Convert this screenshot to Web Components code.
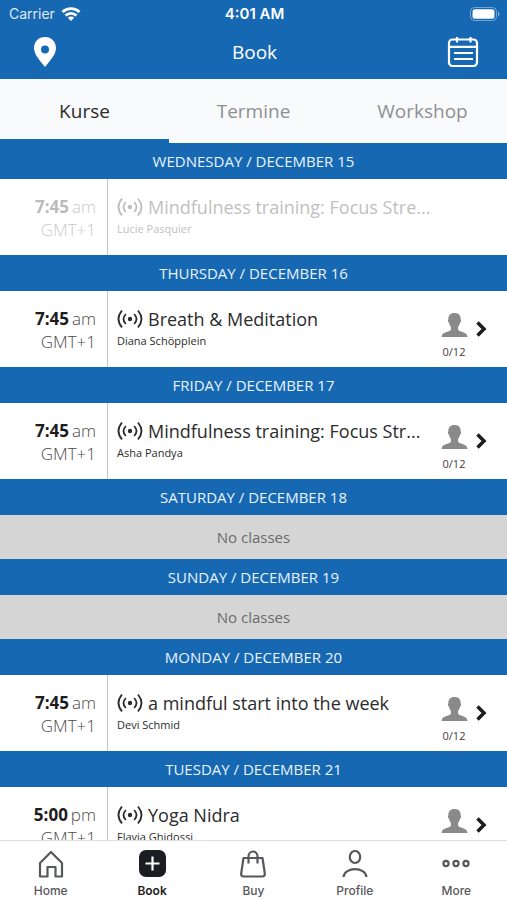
<!DOCTYPE html>
<html lang="en">
<head>
<meta charset="utf-8">
<meta name="viewport" content="width=device-width, initial-scale=1">
<title>Book</title>
<style>
    body {
        margin: 0;
        font-family: "Open Sans", "Noto Sans", sans-serif;
        color: #2b2b2b;
        background: #fff;
        --brand: #1768b3;
    }
</style>
</head>
<body>
<booking-app>
    <status-bar slot="top" carrier="Carrier" time="4:01 AM"></status-bar>
    <title-bar slot="top">Book</title-bar>
    <tab-strip slot="top">
        <tab-item active>Kurse</tab-item>
        <tab-item>Termine</tab-item>
        <tab-item>Workshop</tab-item>
    </tab-strip>

    <day-section>
        <span slot="day">WEDNESDAY / DECEMBER 15</span>
        <class-row time="7:45" period="am" zone="GMT+1" teacher="Lucie Pasquier" past>Mindfulness training: Focus Stre...</class-row>
    </day-section>
    <day-section>
        <span slot="day">THURSDAY / DECEMBER 16</span>
        <class-row time="7:45" period="am" zone="GMT+1" teacher="Diana Schöpplein" booked="0/12">Breath &amp; Meditation</class-row>
    </day-section>
    <day-section>
        <span slot="day">FRIDAY / DECEMBER 17</span>
        <class-row time="7:45" period="am" zone="GMT+1" teacher="Asha Pandya" booked="0/12">Mindfulness training: Focus Str...</class-row>
    </day-section>
    <day-section>
        <span slot="day">SATURDAY / DECEMBER 18</span>
    </day-section>
    <day-section>
        <span slot="day">SUNDAY / DECEMBER 19</span>
    </day-section>
    <day-section>
        <span slot="day">MONDAY / DECEMBER 20</span>
        <class-row time="7:45" period="am" zone="GMT+1" teacher="Devi Schmid" booked="0/12">a mindful start into the week</class-row>
    </day-section>
    <day-section>
        <span slot="day">TUESDAY / DECEMBER 21</span>
        <class-row time="5:00" period="pm" zone="GMT+1" teacher="Flavia Ghidossi" booked="0/12">Yoga Nidra</class-row>
    </day-section>

    <nav-bar slot="bottom">
        <nav-item icon="home">Home</nav-item>
        <nav-item icon="book" active>Book</nav-item>
        <nav-item icon="buy">Buy</nav-item>
        <nav-item icon="profile">Profile</nav-item>
        <nav-item icon="more">More</nav-item>
    </nav-bar>
</booking-app>

<script>
function template(html) {
    const tmp = document.createElement('template');
    tmp.innerHTML = html;
    return tmp;
}

const NAV_ICONS = {
    home: `<path d="M3 13 14 2 25 13v13.500h-6.500V17h-8v9.500H3z"/>`,
    book: `<rect x="1" y="0" width="27" height="27" rx="7" fill="currentColor" stroke="none"/><path d="M14.500 6.500v14M7.500 13.500h14" stroke="#fff"/>`,
    buy: `<path d="M4.500 8h19l2.300 15.500q.3 3-2.700 3H4.900q-3 0-2.700-3z"/><path d="M9.500 13.500V6.500a4.500 5 0 0 1 9 0v7"/>`,
    profile: `<ellipse cx="14" cy="7" rx="5.200" ry="6"/><path d="M2.500 27c1-10.500 22-10.500 23 0"/>`,
    more: `<circle cx="4" cy="13.500" r="2.600"/><circle cx="14" cy="13.500" r="2.600"/><circle cx="24" cy="13.500" r="2.600"/>`
};

/**
 * Base class: clones the static template of the subclass into an open shadow root.
 */
class BaseElement extends HTMLElement {
    constructor() {
        super();
        this.attachShadow({mode: 'open'});
        this.shadowRoot.append(this.constructor.template.content.cloneNode(true));
    }

    setText(id, value) {
        this.shadowRoot.getElementById(id).textContent = value || '';
    }
}


class BookingApp extends BaseElement {
    static template = template(`
        <style>
            :host {
                display: flex;
                flex-direction: column;
                height: 100vh;
            }

            main {
                flex: 1;
                min-height: 0;
                overflow-y: auto;
                scrollbar-width: none;
            }
        </style>
        <header><slot name="top"></slot></header>
        <main><slot></slot></main>
        <footer><slot name="bottom"></slot></footer>`);
}


class StatusBar extends BaseElement {
    static template = template(`
        <style>
            :host {
                display: grid;
                grid-template-columns: 1fr auto 1fr;
                align-items: center;
                height: 28px;
                padding: 0 7px 0 9px;
                font: 400 14px/20px Inter, sans-serif;
                color: #fff;
                background: var(--brand);
            }

            .left {
                display: flex;
                align-items: center;
                gap: 6px;
            }

            #carrier { opacity: 0.85; }
            #time { font-size: 15px; font-weight: 600; }
            .battery { justify-self: end; }
            svg { display: block; }
        </style>
        <div class="left">
            <span id="carrier"></span>
            <svg width="20" height="14" viewBox="0 0 20 14" fill="none" stroke="#fff" stroke-width="2.800">
                <path d="M1.500 5a12.500 12.500 0 0 1 17 0M4.500 8.500a8 8 0 0 1 11 0"/>
                <path d="M10 14 6.800 10.800a4.600 4.600 0 0 1 6.400 0z" fill="#fff" stroke="none"/>
            </svg>
        </div>
        <span id="time"></span>
        <svg class="battery" width="30" height="14" viewBox="0 0 30 14">
            <rect x=".5" y=".5" width="26" height="13" rx="4" fill="none" stroke="#fff" stroke-opacity=".4"/>
            <rect x="2.500" y="2.300" width="22" height="9.400" rx="2.500" fill="#fff"/>
            <path d="M28 4.500q3 2.500 0 5z" fill="#fff" fill-opacity=".5"/>
        </svg>`);

    connectedCallback() {
        this.setText('carrier', this.getAttribute('carrier'));
        this.setText('time', this.getAttribute('time'));
    }
}


class TitleBar extends BaseElement {
    static template = template(`
        <style>
            :host {
                display: flex;
                align-items: center;
                justify-content: space-between;
                box-sizing: border-box;
                height: 51px;
                padding: 0 28px 3px;
                color: #fff;
                background: var(--brand);
            }

            h1 {
                margin: 0;
                font-size: 19px;
                line-height: 28px;
                font-weight: 400;
            }

            button {
                display: block;
                padding: 0;
                border: 0;
                color: inherit;
                background: none;
            }

            svg { display: block; }
        </style>
        <button type="button" aria-label="Location">
            <svg width="34" height="32" viewBox="0 0 34 32">
                <path fill="#fff" fill-rule="evenodd" d="M17 1C10.500 1 6 5.800 6 12c0 7 7 13.500 11 19 4-5.500 11-12 11-19C28 5.800 23.500 1 17 1zm0 8.500a4 4 0 1 0 0 8 4 4 0 0 0 0-8z"/>
            </svg>
        </button>
        <h1><slot></slot></h1>
        <button type="button" aria-label="Calendar">
            <svg width="32" height="32" viewBox="0 0 32 32" fill="none" stroke="#fff" stroke-width="2.200">
                <rect x="2" y="3.500" width="28" height="26.500" rx="3.500"/>
                <path d="M2 10.800h28M10 1v5.500M23.500 1v5.500M7 17h19M7 23h19"/>
            </svg>
        </button>`);
}


class TabStrip extends BaseElement {
    static template = template(`
        <style>
            :host {
                display: grid;
                grid-template-columns: repeat(3, 1fr);
                height: 64px;
                background: #f9fafc;
            }
        </style>
        <slot></slot>`);

    connectedCallback() {
        this.setAttribute('role', 'tablist');
    }
}


class TabItem extends BaseElement {
    static template = template(`
        <style>
            :host { display: grid; }

            button {
                padding: 4px 0 0;
                border: 0;
                border-bottom: 4px solid transparent;
                font: 400 19px/28px "Open Sans", sans-serif;
                color: #8e8f92;
                background: none;
            }

            :host([active]) button {
                color: #2b2b2b;
                border-color: var(--brand);
            }
        </style>
        <button type="button" role="tab"><slot></slot></button>`);

    connectedCallback() {
        this.shadowRoot.querySelector('button').setAttribute('aria-selected', this.hasAttribute('active'));
    }
}


class DaySection extends BaseElement {
    static template = template(`
        <style>
            :host { display: block; }

            h2 {
                margin: 0;
                font-size: 15px;
                line-height: 36px;
                font-weight: 400;
                text-align: center;
                color: #e8f3fc;
                background: var(--brand);
            }

            .empty {
                margin: 0;
                font-size: 15px;
                line-height: 44px;
                text-align: center;
                color: #6b6b6b;
                background: #d5d5d5;
            }

            [hidden] { display: none; }
        </style>
        <h2><slot name="day"></slot></h2>
        <slot></slot>
        <p class="empty" hidden>No classes</p>`);

    connectedCallback() {
        this.shadowRoot.querySelector('.empty').hidden = !!this.querySelector('class-row');
    }
}


class ClassRow extends BaseElement {
    static template = template(`
        <style>
            :host {
                display: grid;
                grid-template-columns: 108px 1fr auto;
                height: 76px;
                background: #fff;
            }

            .when {
                padding: 16px 11px 0 0;
                border-right: 1px solid #c4c4c4;
                font-size: 17px;
                line-height: 23px;
                font-weight: 300;
                text-align: right;
                white-space: nowrap;
                color: #4a4a4a;
            }

            .when div {
                display: flex;
                justify-content: flex-end;
                gap: 3px;
            }

            #time { font-weight: 700; color: #1d1d1d; }

            .what {
                min-width: 0;
                padding: 16px 0 0 9px;
            }

            .title {
                display: flex;
                align-items: center;
                gap: 5px;
            }

            h3 {
                margin: 0;
                font-size: 18px;
                line-height: 24px;
                font-weight: 400;
                white-space: nowrap;
            }

            #teacher {
                margin: 0;
                font-size: 11px;
                line-height: 20px;
            }

            .spots {
                display: grid;
                grid-template-columns: 28px 12px;
                column-gap: 7px;
                align-content: start;
                align-items: end;
                justify-items: center;
                padding: 22px 20px 0 0;
                color: #1d1d1d;
            }

            #booked {
                font-size: 11px;
                line-height: 30px;
                color: #3c3c3c;
            }

            svg { display: block; flex: none; }
            :host([past]) .when > *, :host([past]) .what { opacity: 0.3; }
            :host([past]) .spots { display: none; }
        </style>
        <div class="when">
            <div><span id="time"></span><span id="period"></span></div>
            <span id="zone"></span>
        </div>
        <div class="what">
            <div class="title">
                <svg width="26" height="20" viewBox="0 0 26 20" fill="none" stroke="currentColor" stroke-width="1.800">
                    <path d="M5 1.500q-7 8.500 0 17M21 1.500q7 8.500 0 17M8.800 5q-4.600 5 0 10M17.200 5q4.600 5 0 10"/>
                    <circle cx="13" cy="10" r="2.200" fill="currentColor" stroke="none"/>
                </svg>
                <h3><slot></slot></h3>
            </div>
            <p id="teacher"></p>
        </div>
        <div class="spots">
            <svg width="28" height="24" viewBox="0 0 28 24" fill="#8a8a8a">
                <path d="M14.500 0c4.300 0 6.400 2.500 6.100 6.300.9.500.6 3-.6 3.500-.4 2-1 3-1.900 4v3c1.500 2.600 9 1.600 9.400 7.200h-26c.4-5.600 7.900-4.600 9.400-7.200v-3c-.9-1-1.500-2-1.900-4-1.200-.5-1.500-3-.6-3.500C8.100 2.500 10.200 0 14.500 0z"/>
            </svg>
            <svg width="12" height="16" viewBox="0 0 12 16" fill="none" stroke="currentColor" stroke-width="3.500">
                <path d="M2.500 1.500 9 8 2.500 14.500"/>
            </svg>
            <span id="booked"></span>
        </div>`);

    connectedCallback() {
        ['time', 'period', 'zone', 'teacher', 'booked'].forEach(name => {
            this.setText(name, this.getAttribute(name));
        });
    }
}


class NavBar extends BaseElement {
    static template = template(`
        <style>
            :host { display: block; }

            nav {
                display: grid;
                grid-template-columns: repeat(5, 1fr);
                height: 59px;
                border-top: 1px solid #dedede;
                background: #fff;
            }
        </style>
        <nav><slot></slot></nav>`);
}


class NavItem extends BaseElement {
    static template = template(`
        <style>
            :host { display: block; }

            a {
                display: flex;
                flex-direction: column;
                align-items: center;
                gap: 5px;
                padding-top: 9px;
                font: 500 12px/16px Inter, sans-serif;
                color: #56585c;
                text-decoration: none;
            }

            :host([active]) a {
                font-weight: 600;
                color: #1c1d20;
            }

            svg { display: block; }
        </style>
        <a href="#">
            <svg width="28" height="28" viewBox="0 0 28 28" fill="none" stroke="currentColor" stroke-width="2.200" stroke-linejoin="round"></svg>
            <slot></slot>
        </a>`);

    connectedCallback() {
        this.shadowRoot.querySelector('svg').innerHTML = NAV_ICONS[this.getAttribute('icon')];
        if (this.hasAttribute('active')) this.shadowRoot.querySelector('a').setAttribute('aria-current', 'page');
    }
}

customElements.define('booking-app', BookingApp);
customElements.define('status-bar', StatusBar);
customElements.define('title-bar', TitleBar);
customElements.define('tab-strip', TabStrip);
customElements.define('tab-item', TabItem);
customElements.define('day-section', DaySection);
customElements.define('class-row', ClassRow);
customElements.define('nav-bar', NavBar);
customElements.define('nav-item', NavItem);
</script>
</body>
</html>
